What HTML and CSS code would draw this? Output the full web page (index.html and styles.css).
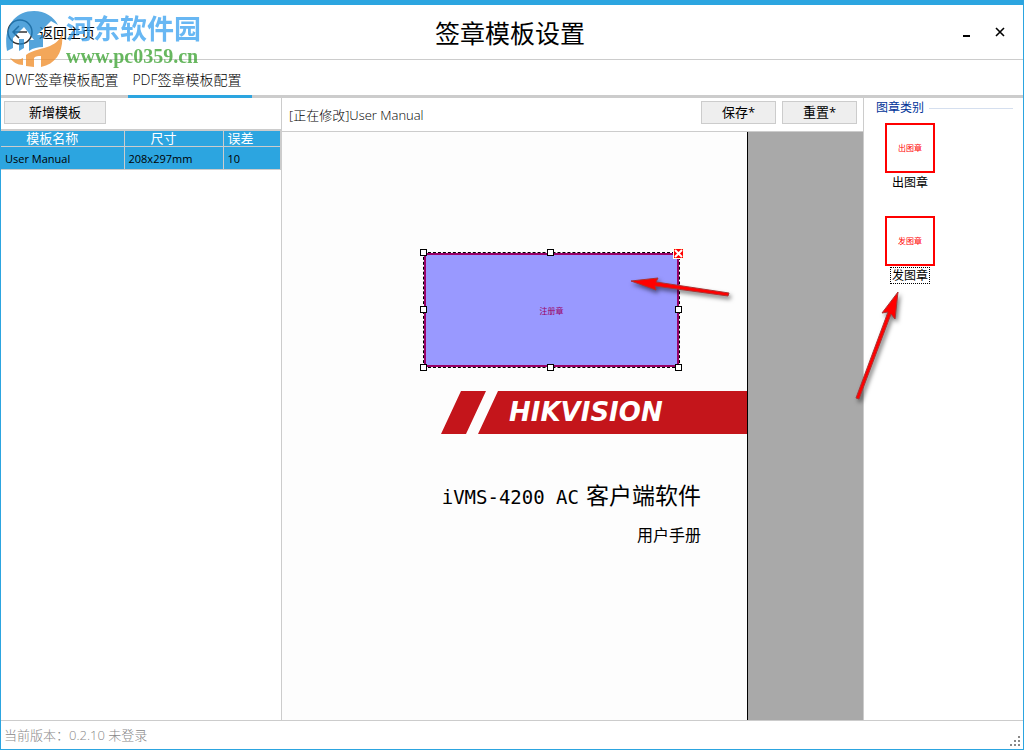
FILE: index.html
```html
<!DOCTYPE html>
<html lang="zh-CN">
<head>
  <meta charset="UTF-8">
  <title>签章模板设置</title>
  <meta name="viewport" content="width=device-width, initial-scale=1.0">
  <link rel="stylesheet" href="styles.css">
</head>
<body>

<div class="window">
  <header class="title-bar">
    <a class="back" href="#">
      <svg width="26" height="26" viewBox="0 0 26 26" fill="none" stroke="#333" stroke-width="1.5">
        <circle cx="13" cy="13" r="12"/>
        <path d="M20 13H7M12 7l-6 6 6 6"/>
      </svg>
      返回主页
    </a>
    <h1>签章模板设置</h1>
    <div class="window-buttons">
      <button aria-label="最小化">
        <svg width="10" height="10" viewBox="0 0 10 10"><path d="M2 9h7" stroke="#000" stroke-width="2"/></svg>
      </button>
      <button aria-label="关闭">
        <svg width="10" height="10" viewBox="0 0 10 10"><path d="M1 1l8 8M9 1L1 9" stroke="#000" stroke-width="1.6"/></svg>
      </button>
    </div>

    <div class="watermark">
      <svg width="58" height="60" viewBox="0 0 58 60">
        <path d="M2 42C-2 19 9 2 29 2c11 0 20 6 24 14l-7-4-14 14h6v12c-5 0-10 1-14 4V31h5L19 18 8 29v10z" fill="#1b86cf"/>
        <path d="M14 30h5v9l-5 3z" fill="#1b86cf"/>
        <path d="M5 49c5 2 9 2 13 0v7C12 56 8 53 5 49z" fill="#f08a24"/>
        <path d="M21 46c6-5 17-6 24-9 6-3 10-6 12-13 2 17-5 31-21 34V47c-3 0-5 0-7 2v9l-8-1z" fill="#f08a24"/>
      </svg>
      <div class="watermark-text">
        <span class="watermark-name">河东软件园</span>
        <span class="watermark-url">www.pc0359.cn</span>
      </div>
    </div>
  </header>

  <nav class="tabs">
    <a href="#">DWF签章模板配置</a>
    <a href="#" class="active">PDF签章模板配置</a>
  </nav>

  <main class="content">
    <section class="templates">
      <div class="toolbar">
        <button class="btn btn-wide">新增模板</button>
      </div>
      <table>
        <thead>
          <tr><th class="col-name">模板名称</th><th class="col-size">尺寸</th><th class="col-error">误差</th></tr>
        </thead>
        <tbody>
          <tr><td>User Manual</td><td>208x297mm</td><td>10</td></tr>
        </tbody>
      </table>
    </section>

    <section class="editor">
      <div class="toolbar editor-bar">
        <span class="editing">[正在修改]User Manual</span>
        <button class="btn">保存*</button>
        <button class="btn">重置*</button>
      </div>
      <div class="canvas">
        <div class="page">
          <div class="stamp-box">
            <span>注册章</span>
            <i class="handle n w"></i>
            <i class="handle n c"></i>
            <i class="handle m w"></i>
            <i class="handle m e"></i>
            <i class="handle s w"></i>
            <i class="handle s c"></i>
            <i class="handle s e"></i>
            <button class="remove" aria-label="删除">
              <svg width="9" height="9" viewBox="0 0 9 9"><path d="M1 1l7 7M8 1L1 8" stroke="#fff" stroke-width="2"/></svg>
            </button>
          </div>
          <div class="banner">HIKVISION</div>
          <h2><span>iVMS-4200 AC</span>客户端软件</h2>
          <p>用户手册</p>
        </div>
        <svg class="arrow arrow-stamp" width="110" height="30" viewBox="0 0 110 30">
          <path d="M4 8L31 5l-2 4 73 11-1 3-73-10 1 4z" fill="#f00" stroke="#a33" stroke-width="1"/>
        </svg>
      </div>
    </section>

    <aside class="categories">
      <h3>图章类别</h3>
      <div class="stamp-list">
        <button class="stamp"><span class="stamp-icon">出图章</span><span class="stamp-name">出图章</span></button>
        <button class="stamp selected"><span class="stamp-icon">发图章</span><span class="stamp-name">发图章</span></button>
      </div>
      <svg class="arrow arrow-category" width="60" height="122" viewBox="0 0 60 122">
        <path d="M47 4l-3 27-4-5L8 111l-3-1 32-86-6 1z" fill="#f00" stroke="#a33" stroke-width="1"/>
      </svg>
    </aside>
  </main>

  <footer class="status">
    <span>当前版本：0.2.10 未登录</span>
    <svg width="10" height="10" viewBox="0 0 10 10" fill="#888">
      <path d="M8 0h2v2H8zM4 4h2v2H4zM8 4h2v2H8zM0 8h2v2H0zM4 8h2v2H4zM8 8h2v2H8z"/>
    </svg>
  </footer>
</div>

</body>
</html>
```
FILE: styles.css
```css
* {
  margin: 0;
  padding: 0;
  box-sizing: border-box;
}

body {
  font-family: "Open Sans", "Noto Sans CJK SC", sans-serif;
  font-size: 13px;
  color: #000;
  background: #fff;
}

a {
  color: inherit;
  text-decoration: none;
}

button {
  font: inherit;
  color: inherit;
  background: none;
  border: none;
}

svg {
  display: block;
  flex: none;
}

.window {
  display: flex;
  flex-direction: column;
  min-height: 100vh;
  border: 1px solid #2ca5e0;
  border-top-width: 5px;
}

/* title bar */
.title-bar {
  position: relative;
  display: grid;
  grid-template-columns: 1fr auto 1fr;
  align-items: center;
  height: 55px;
  padding: 0 18px 0 6px;
  border-bottom: 1px solid #ccc;
}

.back {
  display: flex;
  align-items: center;
  gap: 6px;
  font-size: 14px;
}

.title-bar h1 {
  padding-left: 8px;
  font-size: 25px;
  font-weight: 400;
}

.window-buttons {
  display: flex;
  justify-content: flex-end;
  gap: 24px;
}

.watermark {
  position: absolute;
  top: 4px;
  left: 4px;
  display: flex;
  gap: 3px;
  opacity: 0.75;
  pointer-events: none;
}

.watermark-text {
  display: flex;
  flex-direction: column;
  padding-top: 4px;
}

.watermark-name {
  font-size: 27px;
  font-weight: 700;
  line-height: 32px;
  color: #36a0f0;
}

.watermark-url {
  font-family: "Liberation Serif", serif;
  font-size: 20px;
  font-weight: 700;
  line-height: 22px;
  color: #36a02c;
}

/* tabs */
.tabs {
  display: flex;
  height: 38px;
  padding-left: 4px;
  border-bottom: 3px solid #ccc;
  font-size: 14px;
  font-weight: 300;
  line-height: 40px;
}

.tabs a {
  height: 38px;
  padding-right: 10px;
}

.tabs .active {
  padding-left: 4px;
  border-bottom: 3px solid #2ca5e0;
}

/* main area */
.content {
  flex: 1;
  display: grid;
  grid-template-columns: 281px 1fr 159px;
}

.toolbar {
  padding: 3px;
}

.btn {
  width: 75px;
  height: 23px;
  font-size: 13px;
  line-height: 18px;
  padding-bottom: 2px;
  background: #eee;
  border: 1px solid #ccc;
}

.btn-wide {
  width: 102px;
}

.templates {
  border-right: 1px solid #ccc;
}

.templates table {
  width: 100%;
  margin-top: 2px;
  border-collapse: collapse;
  border-top: 2px solid #ccc;
  table-layout: fixed;
  background: #2ca5e0;
}

.templates th,
.templates td {
  border-right: 1px solid #ccc;
  border-bottom: 1px solid #ccc;
}

.templates th {
  height: 16px;
  font-size: 13px;
  font-weight: 400;
  line-height: 15px;
  color: #fff;
}

.templates td {
  height: 23px;
  padding-left: 4px;
  font-size: 11px;
}

.templates .col-name {
  width: 123px;
  padding-right: 20px;
}

.templates .col-size {
  width: 99px;
  padding-right: 20px;
}

.templates .col-error {
  padding-left: 4px;
  text-align: left;
}

.editor {
  display: flex;
  flex-direction: column;
  border-right: 1px solid #ccc;
}

.editor-bar {
  display: flex;
  gap: 6px;
  height: 34px;
  padding: 3px 6px 3px 7px;
  border-bottom: 1px solid #ccc;
}

.editing {
  flex: 1;
  font-weight: 300;
  line-height: 28px;
}

.canvas {
  position: relative;
  flex: 1;
  display: flex;
  background: #a9a9a9;
}

.page {
  position: relative;
  width: 466px;
  padding-top: 259px;
  background: #fdfdfd;
  border-right: 1px solid #000;
}

.stamp-box {
  position: absolute;
  top: 121px;
  left: 142px;
  display: flex;
  align-items: center;
  justify-content: center;
  width: 255px;
  height: 114px;
  border: 2px solid #906;
  outline: 1px dashed #000;
  background: #99f;
  font-size: 8px;
  color: #906;
}

.handle {
  position: absolute;
  width: 7px;
  height: 7px;
  background: #fff;
  border: 1px solid #000;
}

.n { top: -6px; }
.m { top: 51px; }
.s { bottom: -6px; }
.w { left: -6px; }
.c { left: 121px; }
.e { right: -5px; }

.remove {
  position: absolute;
  top: -6px;
  right: -6px;
  background: #f00;
  outline: 1px solid #ffe;
}

.banner {
  height: 43px;
  margin-left: 159px;
  padding-left: 68px;
  background: #c4151b;
  clip-path: polygon(20px 0, 45px 0, 25px 100%, 37px 100%, 57px 0, 100% 0, 100% 100%, 0 100%);
  font-family: "DejaVu Sans", sans-serif;
  font-size: 26px;
  font-style: italic;
  font-weight: 700;
  line-height: 43px;
  color: #fff;
}

.page h2,
.page p {
  padding-right: 46px;
  text-align: right;
}

.page h2 {
  margin-top: 44px;
  font-size: 23px;
  font-weight: 400;
  line-height: 34px;
}

.page h2 span {
  margin-right: 7px;
  font-family: "DejaVu Sans Mono", monospace;
  font-size: 19px;
}

.page p {
  margin-top: 9px;
  font-size: 16px;
  line-height: 24px;
}

.arrow {
  position: absolute;
  filter: drop-shadow(2px 3px 2px rgba(0, 0, 0, 0.5));
}

.arrow-stamp {
  top: 141px;
  left: 345px;
}

/* stamp categories */
.categories {
  position: relative;
  padding: 0 10px 0 12px;
}

.categories h3 {
  display: flex;
  align-items: center;
  gap: 5px;
  font-size: 12px;
  font-weight: 400;
  line-height: 20px;
  color: #039;
}

.categories h3::after {
  content: "";
  flex: 1;
  height: 1px;
  background: #d5dfef;
}

.stamp-list {
  display: flex;
  flex-direction: column;
  align-items: flex-start;
  gap: 25px;
  padding: 5px 9px;
}

.stamp {
  display: flex;
  flex-direction: column;
  align-items: center;
  gap: 1px;
}

.stamp-icon {
  width: 50px;
  height: 50px;
  border: 2px solid #f00;
  font-size: 8px;
  line-height: 46px;
  color: #f00;
}

.stamp-name {
  padding: 0 1px;
  border: 1px solid transparent;
  font-size: 12px;
  line-height: 15px;
}

.selected .stamp-name {
  border: 1px dotted #000;
}

.arrow-category {
  top: 190px;
  left: -13px;
}

/* status bar */
.status {
  display: flex;
  justify-content: space-between;
  align-items: flex-end;
  height: 29px;
  padding: 0 3px 3px;
  border-top: 1px solid #ccc;
  font-size: 13px;
  font-weight: 300;
  line-height: 22px;
  color: #888;
}
```
